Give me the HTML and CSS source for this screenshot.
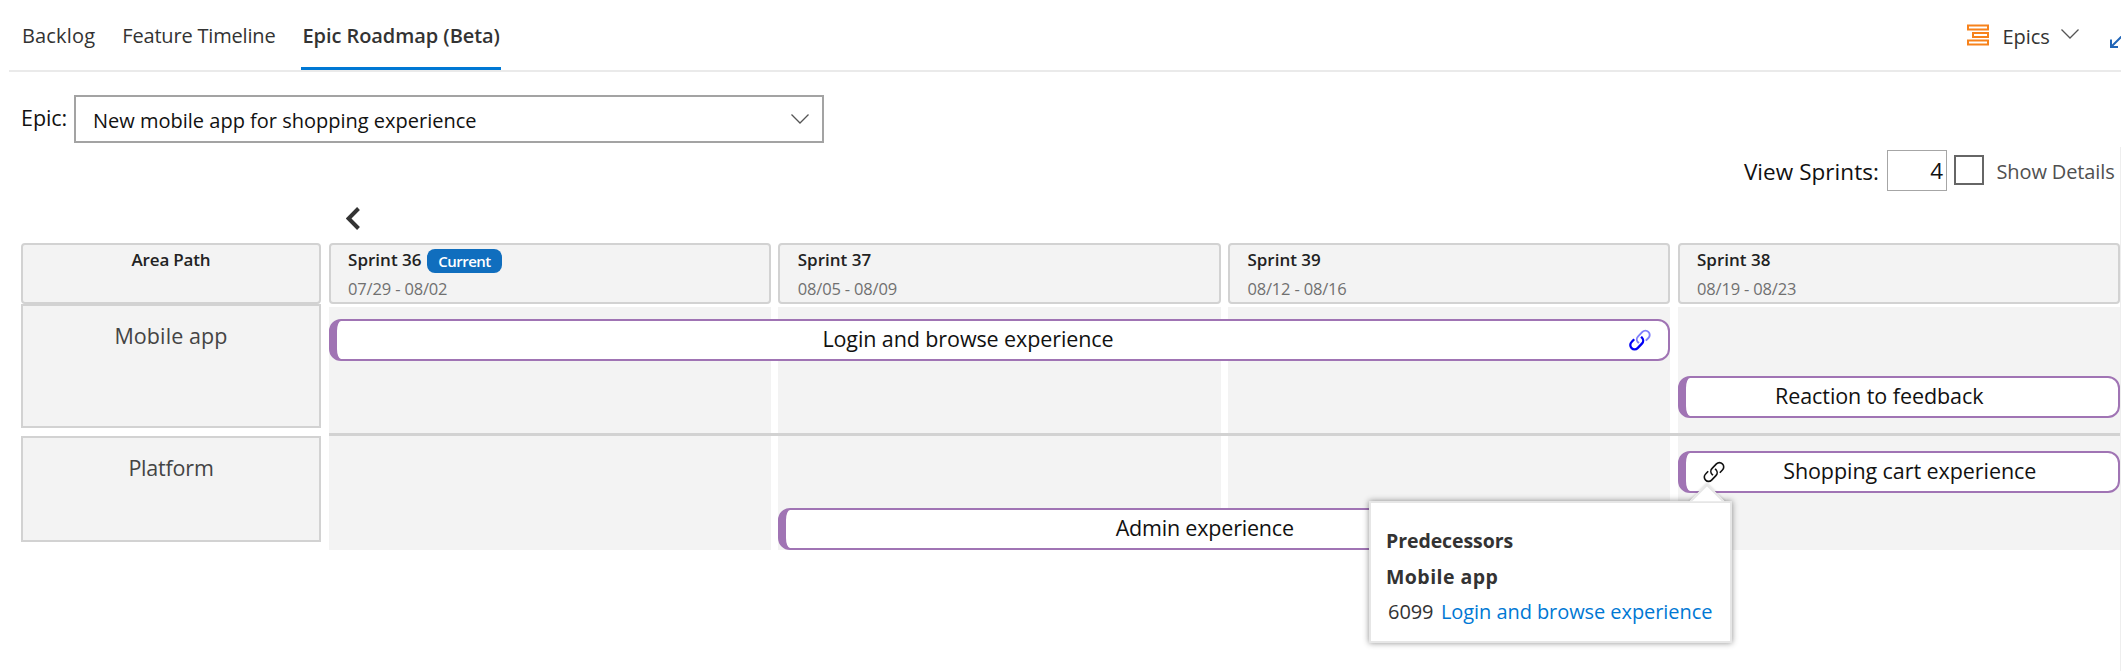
FILE: index.html
```html
<!DOCTYPE html>
<html lang="en">
<head>
<meta charset="utf-8">
<title>Epic Roadmap</title>
<link rel="stylesheet" href="styles.css">
</head>
<body>
<svg class="defs" width="0" height="0" aria-hidden="true">
  <symbol id="link-lower" viewBox="0 0 22 22">
    <path d="M5.2 10.3 2.6 13a4.2 4.2 0 0 0 0 6.1 4.2 4.2 0 0 0 6 0l4.3-4.5a4.2 4.2 0 0 0 .1-5.9L12 7.9"/>
  </symbol>
  <symbol id="link-upper" viewBox="0 0 22 22">
    <path d="M16.8 11.7 19.4 9a4.2 4.2 0 0 0 0-6.1 4.2 4.2 0 0 0-6 0L9.1 7.4a4.2 4.2 0 0 0-.1 5.9l1 .8"/>
  </symbol>
</svg>

<header class="header">
  <nav class="tabs">
    <a class="tab tab-backlog">Backlog</a>
    <a class="tab tab-timeline">Feature Timeline</a>
    <a class="tab tab-active">Epic Roadmap (Beta)</a>
  </nav>
  <div class="level">
    <svg class="level-icon" width="22" height="22" viewBox="0 0 22 22"><path d="M1 1.5h20v4H1zM6 9h15v4H6zM1 16.5h20v4H1z"/></svg>
    <span class="level-name">Epics</span>
    <svg class="chevron" width="18" height="10" viewBox="0 0 18 10"><path d="M.5.5 9 9 17.5.5"/></svg>
    <svg class="expand" width="11" height="12" viewBox="0 0 11 12"><path d="M1 3.5V11h7M1 11 12 0"/></svg>
  </div>
</header>

<div class="epic-picker">
  <label class="epic-label">Epic:</label>
  <div class="select">
    <span class="select-value">New mobile app for shopping experience</span>
    <svg class="chevron" width="18" height="10" viewBox="0 0 18 10"><path d="M.5.5 9 9 17.5.5"/></svg>
  </div>
</div>

<main class="board">
  <div class="options">
    <span class="sprints-label">View Sprints:</span>
    <span class="sprints-input">4</span>
    <span class="checkbox"></span>
    <span class="details-label">Show Details</span>
  </div>
  <div class="pager">
    <svg class="back" width="14" height="23" viewBox="0 0 14 23"><path d="M12.5 1.5 2.6 11.5l9.9 10"/></svg>
  </div>

  <div class="roadmap">
    <div class="areas">
      <div class="head area-head">Area Path</div>
      <div class="area area-mobile">Mobile app</div>
      <div class="area area-platform">Platform</div>
    </div>
    <div class="timeline">
      <div class="columns">
        <div class="head"><div class="sprint">Sprint 36<span class="badge">Current</span></div><div class="dates">07/29 - 08/02</div></div>
        <div class="head"><div class="sprint">Sprint 37</div><div class="dates">08/05 - 08/09</div></div>
        <div class="head"><div class="sprint">Sprint 39</div><div class="dates">08/12 - 08/16</div></div>
        <div class="head"><div class="sprint">Sprint 38</div><div class="dates">08/19 - 08/23</div></div>
      </div>
      <div class="columns lane lane-mobile">
        <div class="cell c1"></div><div class="cell c2"></div><div class="cell c3"></div><div class="cell c4"></div>
        <div class="bar bar-login">
          <span class="bar-title">Login and browse experience</span>
          <svg class="link link-blue" width="22" height="22"><use href="#link-upper" class="faded"/><use href="#link-lower" class="strong"/></svg>
        </div>
        <div class="bar bar-reaction"><span class="bar-title">Reaction to feedback</span></div>
      </div>
      <div class="columns lane lane-platform">
        <div class="cell c1"></div><div class="cell c2"></div><div class="cell c3"></div><div class="cell c4"></div>
        <div class="bar bar-admin"><span class="bar-title">Admin experience</span></div>
        <div class="bar bar-cart">
          <svg class="link" width="22" height="22"><use href="#link-upper"/><use href="#link-lower"/></svg>
          <span class="bar-title">Shopping cart experience</span>
          <div class="callout">
            <div class="callout-title">Predecessors</div>
            <div class="callout-area">Mobile app</div>
            <div class="callout-item"><span class="item-id">6099</span><a class="item-link">Login and browse experience</a></div>
          </div>
        </div>
      </div>
    </div>
  </div>
</main>
</body>
</html>
```
FILE: styles.css
```css
* { box-sizing: border-box; }

body {
  margin: 0;
  width: 2121px;
  height: 671px;
  overflow: hidden;
  display: flex;
  flex-direction: column;
  background: #fff;
  color: #111;
  font-family: "Open Sans", "Noto Sans", sans-serif;
  font-size: 20px;
  white-space: nowrap;
}

.defs { position: absolute; }
svg { display: block; flex: none; fill: none; }

/* Header */
.header {
  flex: none;
  display: flex;
  justify-content: space-between;
  height: 72px;
  margin-left: 9px;
  padding-left: 12px;
  border-bottom: 2px solid #eaeaea;
  color: #333;
}
.tabs { display: flex; gap: 25px; }
.tab { height: 70px; padding: 0 1px; line-height: 72px; }
.tab-backlog { letter-spacing: .17px; }
.tab-timeline { letter-spacing: -.18px; }
.tab-active {
  width: 200px;
  font-weight: 600;
  letter-spacing: -.06px;
  border-bottom: 3px solid #0078d4;
}
.level { display: flex; align-items: center; height: 70px; }
.level-icon { margin-right: 13.5px; stroke: #f7821b; stroke-width: 2; }
.level-name { width: 58.5px; padding-top: 2px; letter-spacing: -.07px; }
.chevron { stroke: #555; stroke-width: 1.3; }
.level .chevron { margin-right: 31px; margin-bottom: 2px; }
.expand { margin-top: 13px; stroke: #2266b8; stroke-width: 2; }

/* Epic selector */
.epic-picker {
  flex: none;
  display: flex;
  align-items: center;
  height: 48px;
  margin: 23px 0 4px;
  padding-left: 21px;
}
.epic-label { width: 53px; padding-bottom: 3px; font-size: 21.5px; letter-spacing: -.06px; }
.select {
  display: flex;
  align-items: center;
  justify-content: space-between;
  width: 750px;
  height: 48px;
  padding: 0 13px 0 17px;
  border: 2px solid #a3a3a3;
}
.select-value { padding-top: 3px; }

/* Board */
.board { flex: 1; border-right: 1px solid #eee; }
.options {
  display: flex;
  align-items: center;
  justify-content: flex-end;
  height: 44px;
  padding: 3px 5px 0 0;
}
.sprints-label { margin-right: 8px; padding-top: 1px; font-size: 22.5px; letter-spacing: .05px; }
.sprints-input {
  width: 60px;
  height: 41px;
  margin-right: 7px;
  padding: 0 3px 0 0;
  border: 1px solid #a6a6a6;
  font-size: 22.5px;
  line-height: 39px;
  text-align: right;
}
.checkbox { width: 30px; height: 30px; margin: 0 12.5px 1px 0; border: 2px solid #666; }
.details-label { width: 118.5px; padding-top: 1px; color: #505050; letter-spacing: -.12px; }
.pager { height: 52px; padding: 16px 0 0 346px; }
.back { stroke: #333; stroke-width: 4; }

.roadmap { display: flex; gap: 7.6px; padding-left: 21px; }
.areas { width: 300px; }
.head, .area { border: 2px solid #d2d2d2; background: #f3f3f3; }
.head { height: 61px; padding-left: 17.5px; border-radius: 4px; color: #222; }
.area-head {
  padding: 0;
  font-size: 17px;
  font-weight: 600;
  line-height: 29px;
  letter-spacing: -.17px;
  text-align: center;
}
.area {
  padding-top: 15px;
  color: #444;
  font-size: 21.5px;
  line-height: 30px;
  text-align: center;
}
.area-mobile { height: 124px; margin-bottom: 8px; letter-spacing: .1px; }
.area-platform { height: 106px; letter-spacing: -.2px; }

.timeline { width: 1791.35px; }
.columns { display: grid; grid-template-columns: repeat(4, 442.4px); column-gap: 7.25px; }
.sprint {
  display: flex;
  align-items: center;
  height: 28px;
  font-size: 17px;
  font-weight: 600;
}
.badge {
  width: 75px;
  height: 24px;
  margin: 4px 0 0 5.5px;
  border-radius: 8px;
  background: #106ebe;
  color: #fff;
  font-size: 15px;
  font-weight: 600;
  line-height: 24px;
  letter-spacing: -.55px;
  text-align: center;
}
.dates { padding-top: 3px; color: #707070; font-size: 16.5px; line-height: 25px; letter-spacing: -.17px; }

/* Lanes */
.lane-mobile { margin-top: 3px; grid-template-rows: 12px 42px 15px 42px 15px; }
.lane-platform { border-top: 3px solid #d2d2d2; grid-template-rows: 15px 42px 15px 42px; }
.cell { grid-row: 1 / -1; background: #f3f3f3; }
.c1 { grid-column: 1; }
.c2 { grid-column: 2; }
.c3 { grid-column: 3; }
.c4 { grid-column: 4; }

.bar {
  position: relative;
  display: flex;
  align-items: center;
  padding-right: 45px;
  border: 2px solid #a074b4;
  border-left-width: 8px;
  border-radius: 12px;
  background: #fff;
}
.bar-title { flex: 1; padding-bottom: 3px; font-size: 21.5px; letter-spacing: -.07px; text-align: center; }
.bar-login { grid-area: 2 / 1 / 3 / 4; padding-right: 17px; }
.bar-login .bar-title { padding-right: 30px; letter-spacing: -.1px; }
.bar-reaction { grid-area: 4 / 4; }
.bar-admin { grid-area: 4 / 2 / 5 / 4; }
.bar-admin .bar-title { letter-spacing: -.19px; }
.bar-cart { grid-area: 2 / 4; padding-left: 17px; }
.bar-cart .bar-title { padding-left: 22px; }

.link { stroke: #111; stroke-width: 1.6; }
.link-blue { margin-bottom: 1px; stroke: #0000f5; }
.faded { stroke-opacity: .5; stroke-width: 1.9; }
.strong { stroke-width: 2.3; }

/* Dependency callout */
.callout {
  position: absolute;
  left: -317px;
  top: 48px;
  z-index: 1;
  width: 363px;
  height: 142px;
  padding: 20px 0 0 15.5px;
  border: 2px solid #e6e6e6;
  background: #fff;
  box-shadow: 0 0 6px rgba(0, 0, 0, .45);
  color: #333;
  line-height: 35.5px;
}
.callout::before {
  content: "";
  position: absolute;
  left: 323px;
  top: -14px;
  width: 24px;
  height: 24px;
  border: solid #e6e6e6;
  border-width: 2px 0 0 2px;
  background: #fff;
  box-shadow: -1px -1px 2px rgba(0, 0, 0, .12);
  clip-path: polygon(-4px -4px, 29px -4px, -4px 29px);
  transform: rotate(45deg);
}
.callout-title, .callout-area { font-size: 19.5px; font-weight: 700; }
.callout-title { letter-spacing: -.08px; }
.callout-area { letter-spacing: .45px; }
.callout-item { display: flex; gap: 7.5px; padding-left: 2px; letter-spacing: -.07px; }
.item-link { color: #0078d4; }
```
